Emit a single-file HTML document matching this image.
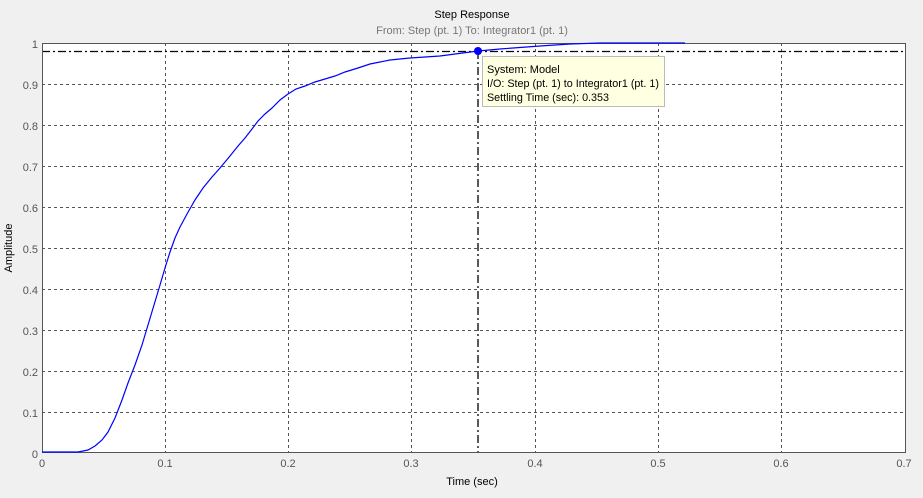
<!DOCTYPE html>
<html><head><style>
body{margin:0;width:923px;height:493px;background:#f0f0f0;overflow:hidden;font-family:"Liberation Sans",sans-serif}
</style></head><body>
<svg width="923" height="493" xmlns="http://www.w3.org/2000/svg" font-family="Liberation Sans, sans-serif">
<rect x="42" y="43" width="864" height="410" fill="#fff"/>
<g stroke="#555" stroke-width="1" stroke-dasharray="3,3">
<line x1="165.5" y1="43" x2="165.5" y2="453"/>
<line x1="288.5" y1="43" x2="288.5" y2="453"/>
<line x1="411.5" y1="43" x2="411.5" y2="453"/>
<line x1="535.5" y1="43" x2="535.5" y2="453"/>
<line x1="658.5" y1="43" x2="658.5" y2="453"/>
<line x1="781.5" y1="43" x2="781.5" y2="453"/>
<line x1="42" y1="84.5" x2="906" y2="84.5"/>
<line x1="42" y1="125.5" x2="906" y2="125.5"/>
<line x1="42" y1="166.5" x2="906" y2="166.5"/>
<line x1="42" y1="207.5" x2="906" y2="207.5"/>
<line x1="42" y1="248.5" x2="906" y2="248.5"/>
<line x1="42" y1="289.5" x2="906" y2="289.5"/>
<line x1="42" y1="330.5" x2="906" y2="330.5"/>
<line x1="42" y1="371.5" x2="906" y2="371.5"/>
<line x1="42" y1="412.5" x2="906" y2="412.5"/>
</g>
<g stroke="#000" stroke-width="1.3" stroke-dasharray="8,3,2,3">
<line x1="42" y1="51.5" x2="906" y2="51.5"/>
<line x1="478" y1="51" x2="478" y2="453"/>
</g>
<rect x="42.5" y="43.5" width="863" height="409" fill="none" stroke="#555"/>
<polyline fill="none" stroke="#0000ff" stroke-width="1.2" points="42,452 78,452 88,450 95,446 102,440 108,432 115,418 122,400 128,383 135,365 142,345 148,325 154,305 160,285 165,268 170,252 175,238 180,227 187,214 195,200 203,188 212,177 220,168 230,156 238,146 245,138 252,129 258,121 265,114 272,108 280,100 288,94 296,89 305,86 315,82 325,79 335,76 345,72 358,68 370,64 380,62 390,60 410,58 440,56 478,51 500,49 540,46 570,44 600,43 685,43"/>
<circle cx="478" cy="51" r="4" fill="#0000ff"/>
<rect x="482.5" y="56.5" width="182" height="50" fill="#ffffe1" stroke="#bbb"/>
<g font-size="11" fill="#000">
<text x="487" y="73">System: Model</text>
<text x="487" y="87" textLength="172" lengthAdjust="spacingAndGlyphs">I/O: Step (pt. 1) to Integrator1 (pt. 1)</text>
<text x="487" y="101" textLength="122" lengthAdjust="spacingAndGlyphs">Settling Time (sec): 0.353</text>
</g>
<text x="472" y="18" font-size="11" text-anchor="middle" fill="#000">Step Response</text>
<text x="472" y="34" font-size="11" text-anchor="middle" fill="#777">From: Step (pt. 1)  To: Integrator1 (pt. 1)</text>
<g font-size="11" fill="#555" text-anchor="end">
<text x="38" y="48">1</text><text x="38" y="89">0.9</text><text x="38" y="130">0.8</text><text x="38" y="171">0.7</text><text x="38" y="212">0.6</text><text x="38" y="253">0.5</text><text x="38" y="294">0.4</text><text x="38" y="335">0.3</text><text x="38" y="376">0.2</text><text x="38" y="417">0.1</text><text x="38" y="458">0</text>
</g>
<g font-size="11" fill="#555" text-anchor="middle">
<text x="42" y="467">0</text><text x="165" y="467">0.1</text><text x="288" y="467">0.2</text><text x="411" y="467">0.3</text><text x="535" y="467">0.4</text><text x="658" y="467">0.5</text><text x="781" y="467">0.6</text><text x="904" y="467">0.7</text>
</g>
<text x="472" y="485" font-size="11" text-anchor="middle" fill="#000">Time (sec)</text>
<text transform="translate(12,248) rotate(-90)" font-size="11" text-anchor="middle" fill="#000">Amplitude</text>
</svg>
</body></html>
